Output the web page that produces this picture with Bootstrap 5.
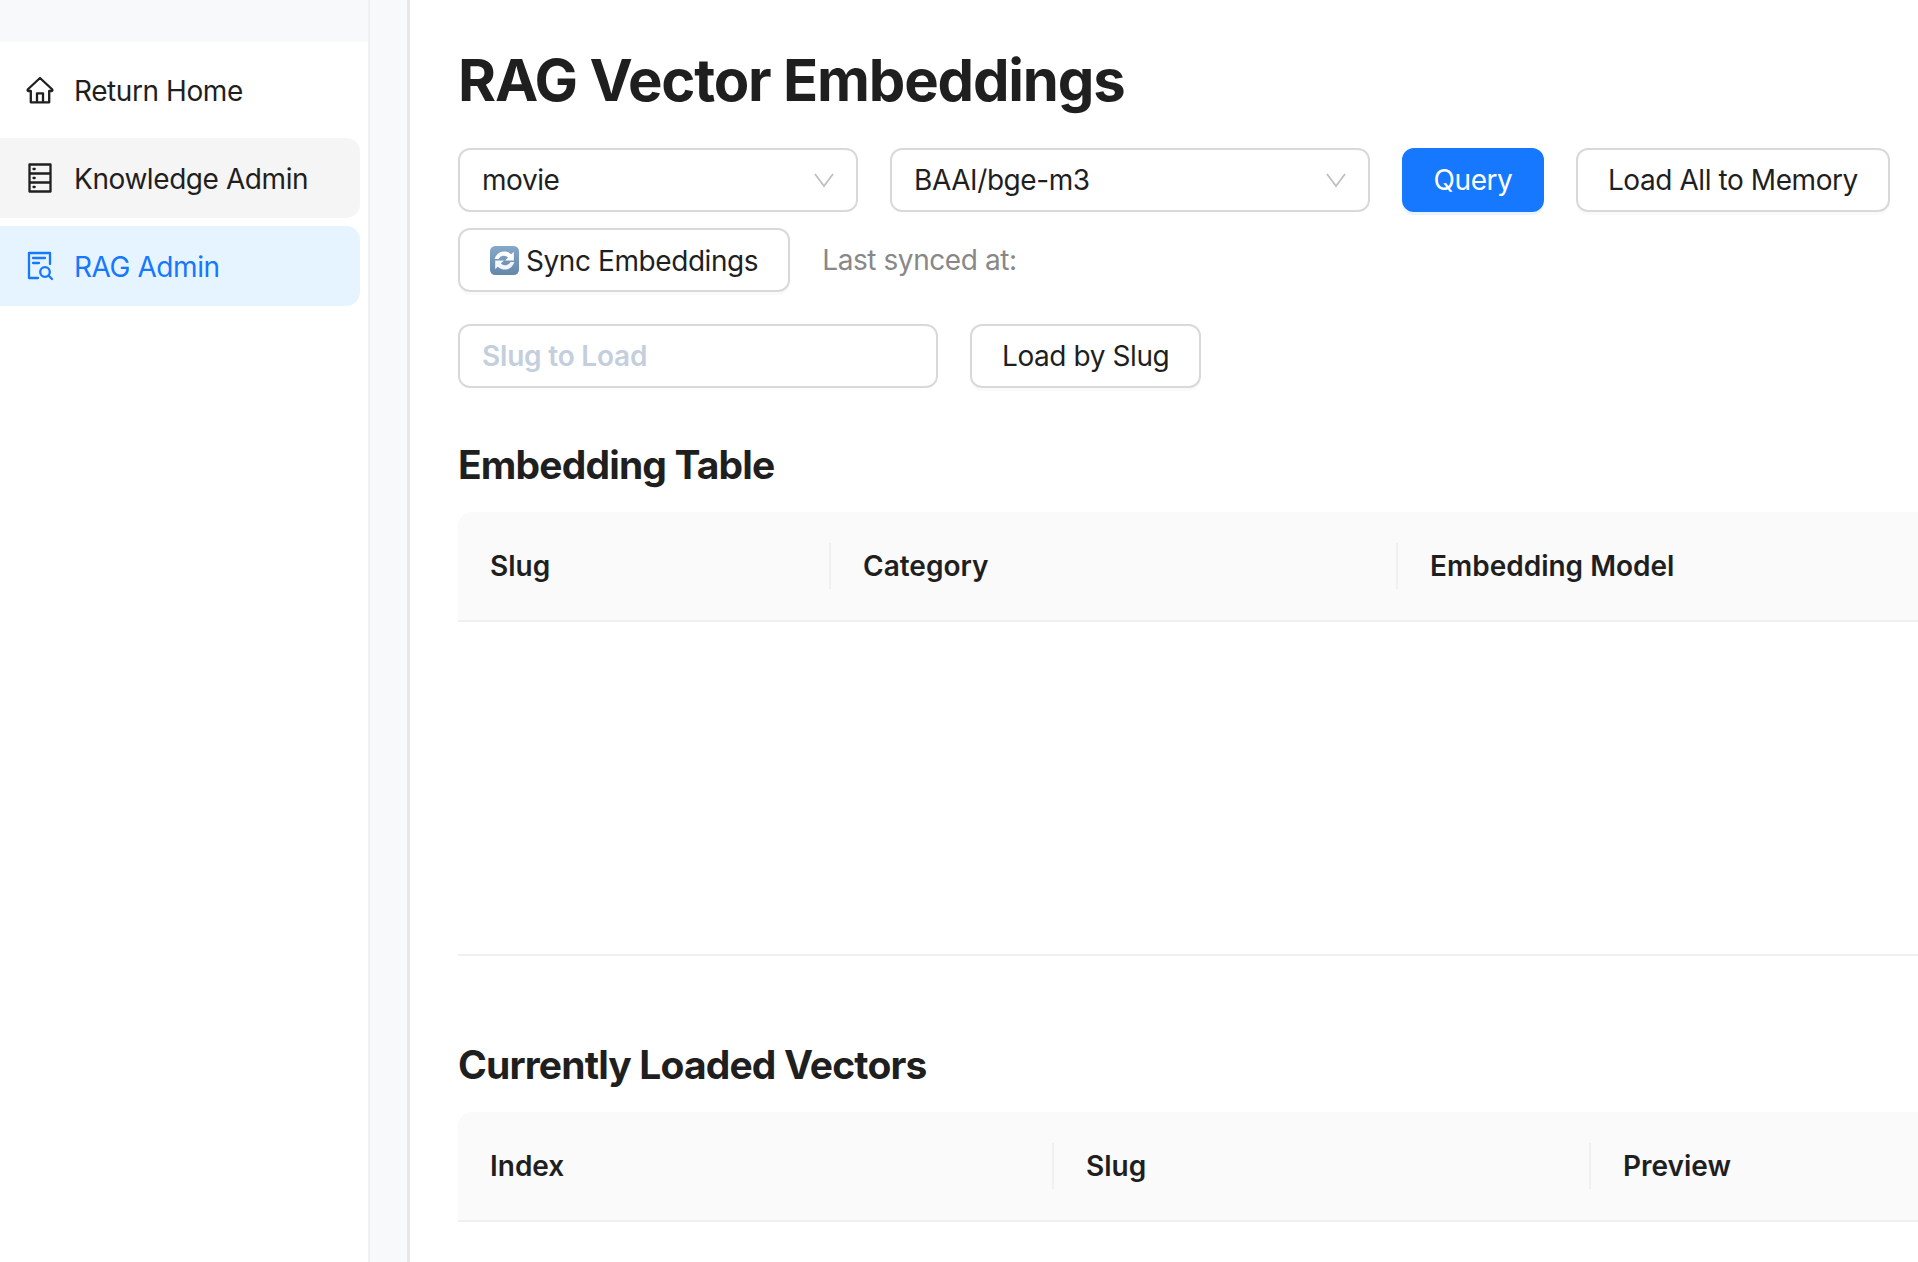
<!DOCTYPE html>
<html lang="en">
<head>
<meta charset="utf-8">
<title>RAG Vector Embeddings</title>
<link rel="stylesheet" href="https://cdn.jsdelivr.net/npm/bootstrap@5.3.0/dist/css/bootstrap.min.css">
<style>
html,body{height:100%;overflow:hidden}
body{font-family:Inter,"Liberation Sans",sans-serif;font-size:28px;letter-spacing:-.42px;color:#1f1f1f;background:#fff}
.shell{height:1262px;width:1918px}
.side{width:370px;flex:none;background:#fff;border-right:2px solid #f0f0f0}
.side-top{height:42px;background:#f8f9fb;margin-bottom:8px}
.side-link{height:80px;width:360px;margin-bottom:8px;padding-left:26px;gap:20px;border-radius:0 14px 14px 0;color:#1f1f1f;text-decoration:none}
.side-link span{padding-top:1px}
.side-link.is-hover{background:#f5f5f5}
.side-link.is-active{background:#e6f4ff;color:#1677ff}
.side-ico{width:28px;height:32px;flex:none;fill:none;stroke:currentColor;stroke-width:2.3;stroke-linejoin:round;stroke-linecap:round}
.gutter{width:40px;flex:none;background:#f8f9fb;border-right:3px solid #e7e7e9}
.main-pane{flex:1;min-width:0;padding:47px 0 0 48px;overflow:hidden}
.page-title{font-size:58px;font-weight:700;line-height:67px;margin:0 0 34px;letter-spacing:-1.2px}
.section-title{font-size:39px;font-weight:700;line-height:50px;margin:52px 0 22px;letter-spacing:-.85px}
.section-title.next{margin-top:84px}
.tool-row{margin-bottom:16px;align-items:center}
.tool-row.last-row{margin-top:32px;margin-bottom:0}
.pick{height:64px;font-size:28px;letter-spacing:-.42px;color:#1f1f1f;border:2px solid #d9d9d9;border-radius:12px;padding:0 60px 0 22px;box-shadow:none;
background-image:url("data:image/svg+xml,%3Csvg xmlns='http://www.w3.org/2000/svg' viewBox='0 0 20 14'%3E%3Cpath d='M1 1l9 12 9-12' fill='none' stroke='%23bfbfbf' stroke-width='1.8'/%3E%3C/svg%3E");background-size:20px 14px;background-position:right 22px center}
.pick-a{width:400px;margin-right:32px}
.pick-b{width:480px;margin-right:32px}
.act{height:64px;font-size:28px;letter-spacing:-.42px;padding:0 30px;border:2px solid #d9d9d9;border-radius:12px;background:#fff;color:#1f1f1f;box-shadow:0 3px 0 rgba(0,0,0,.02);white-space:nowrap;line-height:1}
.act.prim{background:#1677ff;border-color:#1677ff;color:#fff;box-shadow:0 3px 0 rgba(5,145,255,.1);margin-right:32px;padding:0 29.500px}
.sync-ico{width:29px;height:29px;margin-right:7px;vertical-align:-4px}
.muted-note{color:#888;margin-left:32px}
.slug-in{width:480px;height:64px;font-size:28px;border:2px solid #d9d9d9;border-radius:12px;padding:0 22px;margin-right:32px}
.slug-in::placeholder{color:#c4cfdd;font-weight:600;letter-spacing:-.2px}
.grid-wrap{width:1460px;overflow:hidden}
.data-grid{table-layout:fixed;width:1460px;margin:0;--bs-table-bg:transparent}
.data-grid th{background:#fafafa;font-size:28px;font-weight:600;letter-spacing:0;color:#1f1f1f;height:109px;padding:0 0 0 32px;vertical-align:middle;border-bottom:2px solid #f0f0f0;position:relative}
.data-grid th:first-child{border-top-left-radius:14px}
.data-grid th+th::before{content:"";position:absolute;left:-2px;top:50%;height:46px;margin-top:-23px;width:2px;background:#f0f0f0}
.empty-cell td{height:334px;border-bottom:2px solid #f0f0f0;padding:0}
</style>
</head>
<body>
<div class="shell d-flex">
  <aside class="side">
    <div class="side-top"></div>
    <a href="#" class="side-link d-flex align-items-center">
      <svg class="side-ico" viewBox="0 0 28 32"><path d="M14 4 1.700 15.500q-.5 1.500 1 1.500H4.800v11.300h18.400V17h2.100q1.500 0 1-1.500zM11 28.300v-9h6v9"/></svg>
      <span>Return Home</span>
    </a>
    <a href="#" class="side-link is-hover d-flex align-items-center">
      <svg class="side-ico" viewBox="0 0 28 32"><path d="M3.500 2.500h21v27h-21zM3.500 11.500h21M3.500 20.500h21M7.500 7h1.200M7.500 16h1.200M7.500 25h1.200"/></svg>
      <span>Knowledge Admin</span>
    </a>
    <a href="#" class="side-link is-active d-flex align-items-center">
      <svg class="side-ico" viewBox="0 0 28 32"><path d="M24 14V3H3v25h9M7 8h12M7 13h6"/><circle cx="19" cy="22" r="4.800"/><path d="m22.500 25.500 3.500 3.500"/></svg>
      <span>RAG Admin</span>
    </a>
  </aside>
  <div class="gutter"></div>
  <main class="main-pane">
    <h1 class="page-title">RAG Vector Embeddings</h1>
    <div class="d-flex tool-row">
      <select class="form-select pick pick-a"><option>movie</option></select>
      <select class="form-select pick pick-b"><option>BAAI/bge-m3</option></select>
      <button type="button" class="btn act prim">Query</button>
      <button type="button" class="btn act">Load All to Memory</button>
    </div>
    <div class="d-flex tool-row">
      <button type="button" class="btn act"><svg class="sync-ico" viewBox="0 0 28 28"><defs><linearGradient id="syncfill" x1="0" y1="0" x2="0" y2="1"><stop offset="0" stop-color="#86a8c8"/><stop offset="1" stop-color="#6488aa"/></linearGradient></defs><rect width="28" height="28" rx="5" fill="url(#syncfill)"/><path d="M4.500 12.500a9.600 9.600 0 0 1 16-4.500l2.500-2.500v8.500h-8.500l3-3A6 6 0 0 0 8.200 12.500z" fill="#fff"/><path d="M23.500 15.500a9.600 9.600 0 0 1-16 4.500L5 22.500V14h8.500l-3 3a6 6 0 0 0 9.300-1.500z" fill="#f2f6fa"/></svg>Sync Embeddings</button>
      <span class="muted-note">Last synced at:</span>
    </div>
    <div class="d-flex tool-row last-row">
      <input class="form-control slug-in" type="text" placeholder="Slug to Load">
      <button type="button" class="btn act">Load by Slug</button>
    </div>
    <h2 class="section-title">Embedding Table</h2>
    <div class="grid-wrap">
      <table class="table data-grid">
        <colgroup><col style="width:373px"><col style="width:567px"><col></colgroup>
        <thead><tr><th>Slug</th><th>Category</th><th>Embedding Model</th></tr></thead>
        <tbody><tr class="empty-cell"><td colspan="3"></td></tr></tbody>
      </table>
    </div>
    <h2 class="section-title next">Currently Loaded Vectors</h2>
    <div class="grid-wrap">
      <table class="table data-grid">
        <colgroup><col style="width:596px"><col style="width:537px"><col></colgroup>
        <thead><tr><th>Index</th><th>Slug</th><th>Preview</th></tr></thead>
      </table>
    </div>
  </main>
</div>
<script src="https://cdn.jsdelivr.net/npm/bootstrap@5.3.0/dist/js/bootstrap.bundle.min.js"></script>
</body>
</html>
